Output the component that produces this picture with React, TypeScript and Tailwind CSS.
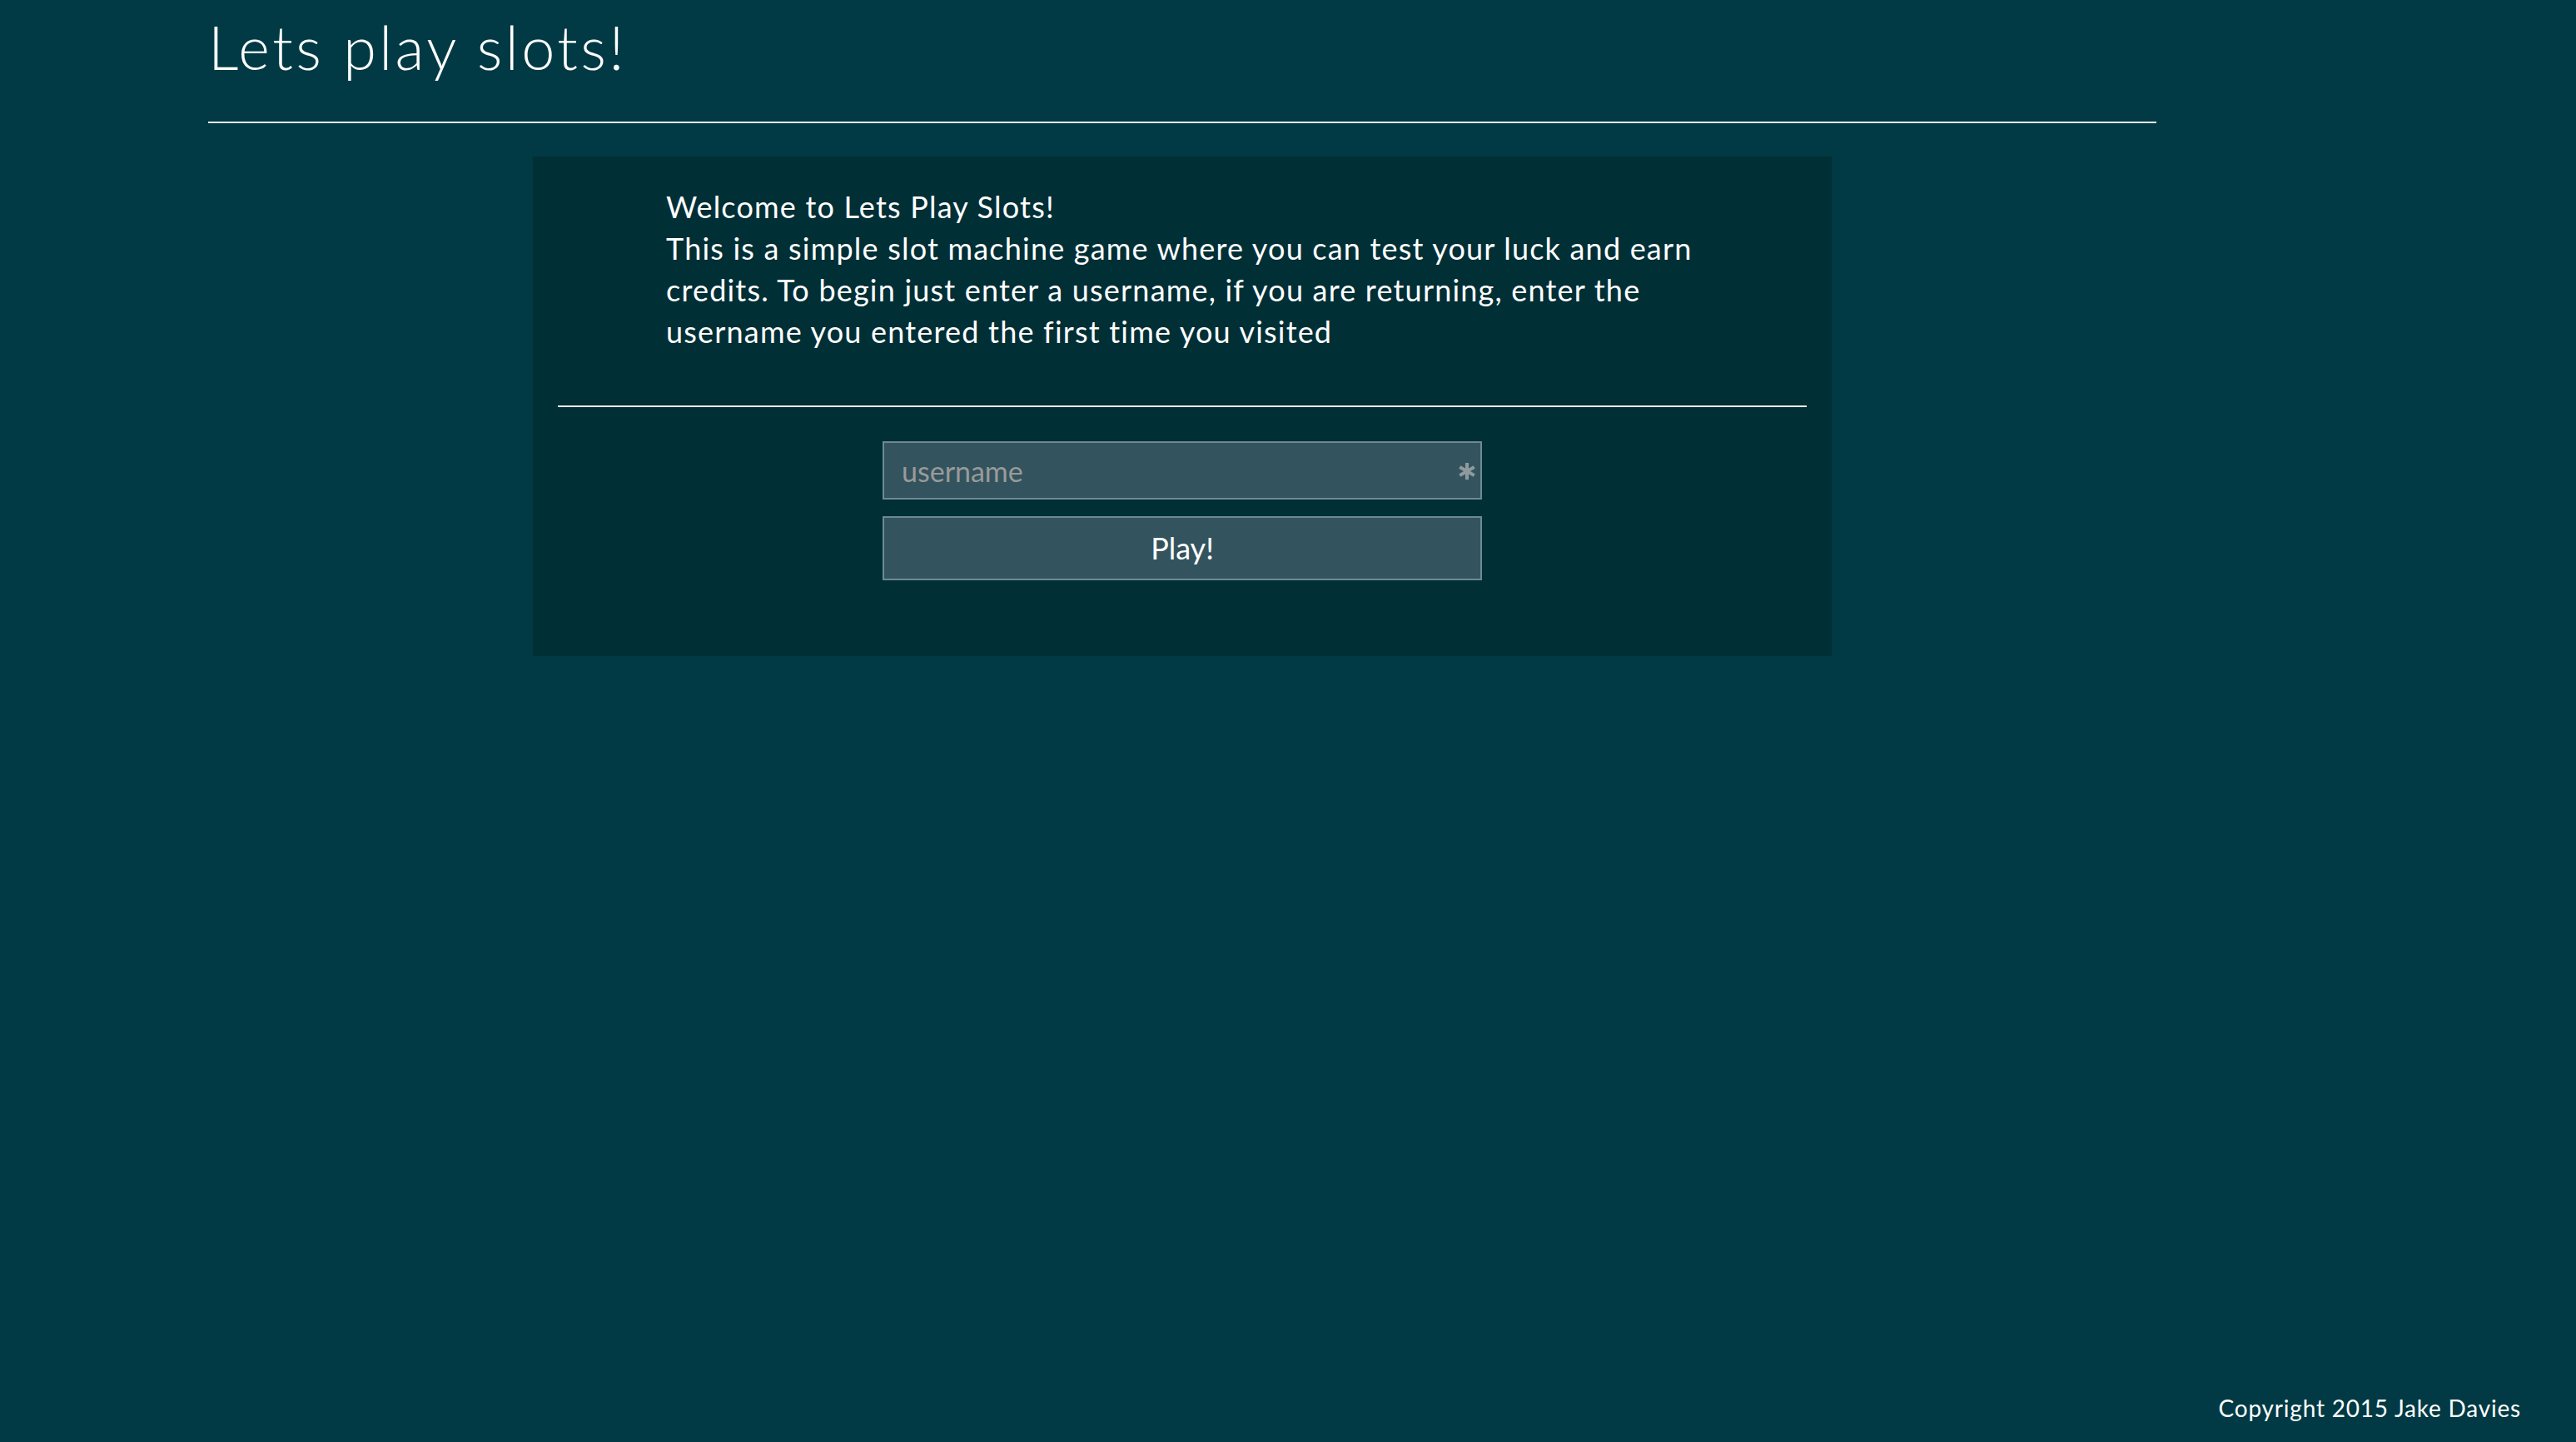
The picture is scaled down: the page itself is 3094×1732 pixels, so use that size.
import React, { useState } from 'react';

const Asterisk: React.FC = () => (
  <svg viewBox="0 0 22 22" className="w-[22px] h-[22px]" fill="none" stroke="#8f9a9c" strokeWidth="4" strokeLinecap="butt">
    <line x1="11" y1="1" x2="11" y2="21" />
    <line x1="2.3" y1="6" x2="19.7" y2="16" />
    <line x1="2.3" y1="16" x2="19.7" y2="6" />
  </svg>
);

const App: React.FC = () => {
  const [username, setUsername] = useState('');

  return (
    <div className="min-h-screen h-screen flex flex-col bg-[#013a44] text-white font-['Lato','Liberation_Sans',sans-serif]">
      {/* Header */}
      <div className="ml-[250px] w-[2340px]">
        <div className="pt-[13px] pb-[47px] border-b-2 border-[#eeeeee]">
          <h1 className="text-[72px] leading-[86px] font-light tracking-[3.4px]">Lets play slots!</h1>
        </div>

        {/* Login panel */}
        <div className="mt-[40px] ml-[390px] w-[1560px] bg-[#012f36] px-[30px] pt-[35px] pb-[91px]">
          <p className="pl-[130px] text-[36px] leading-[50px] tracking-[1.2px]">
            Welcome to Lets Play Slots!
            <br />
            This is a simple slot machine game where you can test your luck and earn
            <br />
            credits. To begin just enter a username, if you are returning, enter the
            <br />
            username you entered the first time you visited
          </p>

          <hr className="mt-[64px] border-0 border-t-2 border-[#eeeeee]" />

          <div className="mt-[41px] mx-auto w-[720px] flex flex-col gap-[20px]">
            <div className="relative">
              <input
                value={username}
                onChange={(e) => setUsername(e.target.value)}
                placeholder="username"
                className="w-full h-[70px] bg-[#33545e] border-2 border-[#6d8a93] pl-[21px] pr-[40px] text-[34px] text-white placeholder:text-[#9a9a9a] outline-none"
              />
              <div className="absolute right-[7px] top-[25px]">
                <Asterisk />
              </div>
            </div>
            <button className="w-full h-[77px] bg-[#33545e] border-2 border-[#6d8a93] pb-[2px] text-[36px] text-white">
              Play!
            </button>
          </div>
        </div>
      </div>

      {/* Footer */}
      <div className="mt-auto flex justify-end pr-[66px] pb-[21px]">
        <span className="text-[28px] leading-[40px] tracking-[0.8px]">Copyright 2015 Jake Davies</span>
      </div>
    </div>
  );
};

export default App;
